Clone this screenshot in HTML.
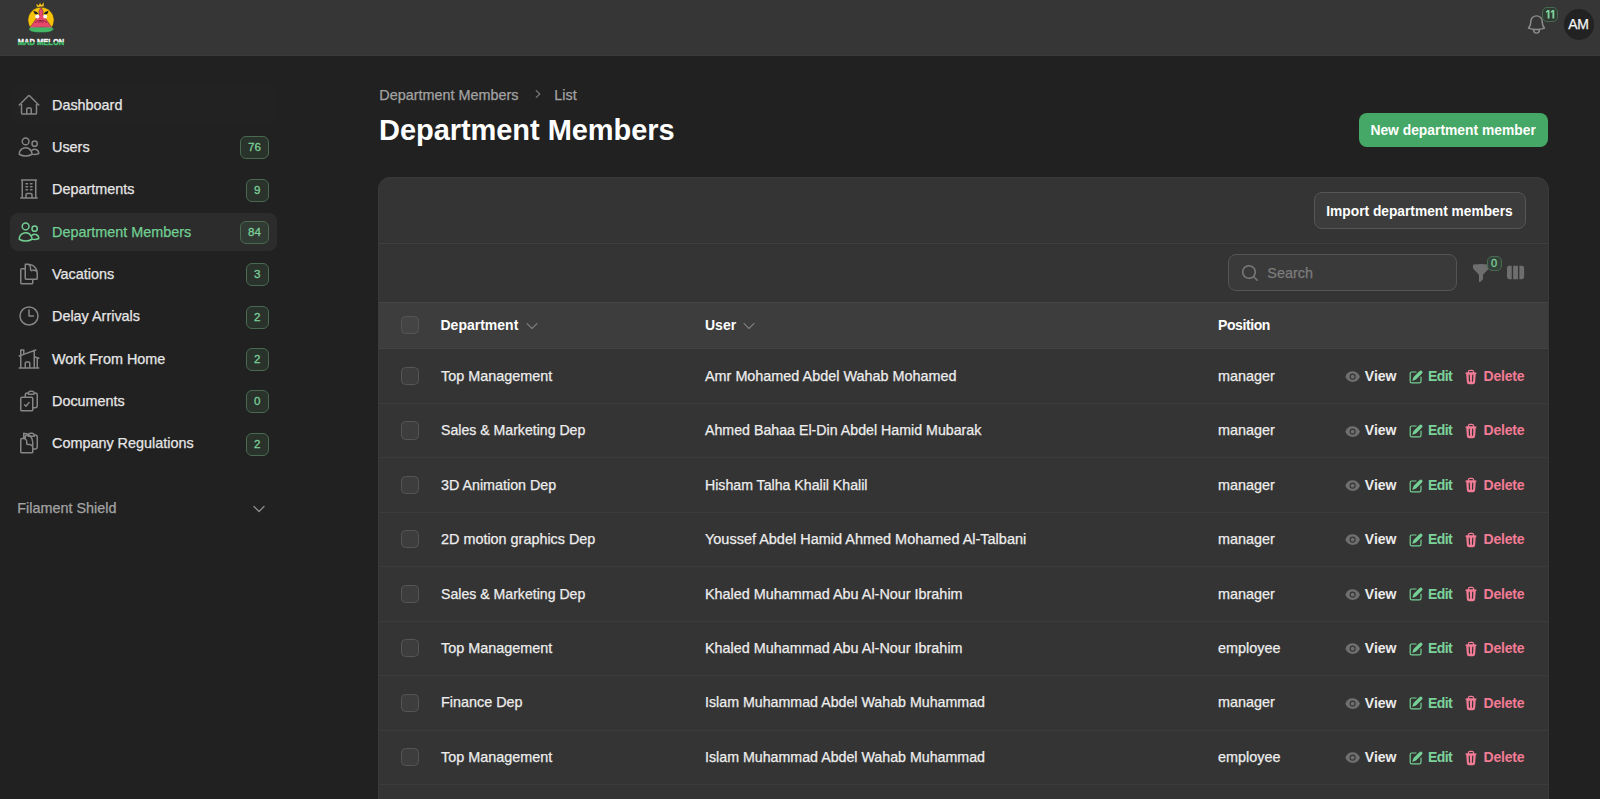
<!DOCTYPE html>
<html><head><meta charset="utf-8">
<style>
*{box-sizing:border-box;margin:0;padding:0}
html,body{width:1600px;height:799px;overflow:hidden;background:#212121;font-family:"Liberation Sans",sans-serif;color:#e8e8e8}
.abs{position:absolute}
.t{position:absolute;white-space:nowrap;line-height:20px}
.m{-webkit-text-stroke:0.25px currentColor}
.badge{position:absolute;height:23px;min-width:23px;padding:0 8.5px 0 7.1px;border-radius:6px;border:1px solid #476a51;background:#29322b;color:#7ccf98;font-size:11.6px;line-height:19.5px;text-align:center;-webkit-text-stroke:0.3px currentColor}
.box{position:absolute}
</style></head><body>
<div class="box" style="left:0;top:0;width:1600px;height:56px;background:#363636;border-bottom:1px solid #3a3a3a"></div>
<svg class="abs" style="left:0px;top:0px;width:80px;height:52px" viewBox="0 0 80 52">
<defs><linearGradient id="lg" x1="0" y1="0" x2="0" y2="1"><stop offset="0" stop-color="#ffffff"/><stop offset="0.58" stop-color="#f2f2f2"/><stop offset="0.62" stop-color="#4cc070"/><stop offset="1" stop-color="#4cc070"/></linearGradient></defs>
<clipPath id="cc"><rect x="0" y="0" width="80" height="28"/></clipPath><circle cx="41" cy="20.2" r="13.1" fill="#f7c20a" stroke="#1c1c24" stroke-width="0.5" clip-path="url(#cc)"/>
<path d="M36 3.4 L38.6 5.2 L40 2.4 L41.6 4.9 L43.8 1.8 L44 6.6 L36.8 7.2 Z" fill="#f3c21c" stroke="#1c1c24" stroke-width="0.3"/>
<path d="M41 7 L43.2 11.5 L42.9 14.6 L51.6 27.2 L30.2 27.2 L39.1 14.6 L38.8 11.5 Z" fill="#e9486c" stroke="#1c1c24" stroke-width="0.4"/>
<path d="M33.4 11.2 Q35.8 10.6 38.4 13.6 L36.8 14.6 Q34 14 33.4 11.2Z" fill="#1e1e26"/>
<path d="M48.6 11.2 Q46.2 10.6 43.6 13.6 L45.2 14.6 Q48 14 48.6 11.2Z" fill="#1e1e26"/>
<circle cx="37.3" cy="16.5" r="2" fill="#ffffff"/><circle cx="45.2" cy="16.5" r="2" fill="#ffffff"/>
<path d="M35 22.8 Q37 20.3 41 20.5 Q45 20.3 47 22.8" stroke="#5a1a2a" stroke-width="0.7" fill="none"/>
<path d="M38.5 22.3 Q41 21.2 43.5 22.3" stroke="#5a1a2a" stroke-width="0.6" fill="none"/>
<path d="M30 27.4 L52 27.4" stroke="#d8d8d8" stroke-width="0.6"/>
<path d="M28.8 28 Q41 26.8 53.6 28 Q54.4 32.6 41 32.6 Q28 32.6 28.8 28Z" fill="#45b866" stroke="#1c1c24" stroke-width="0.3"/>
<text x="18" y="45.4" font-family="Liberation Sans" font-weight="bold" font-size="9.4" fill="#1a1a20" textLength="46.4" lengthAdjust="spacingAndGlyphs" stroke="#1a1a20" stroke-width="0.8">MAD MELON</text><text x="17.7" y="44.6" font-family="Liberation Sans" font-weight="bold" font-size="9.4" fill="url(#lg)" textLength="46.6" lengthAdjust="spacingAndGlyphs" stroke="url(#lg)" stroke-width="0.55">MAD MELON</text>
</svg>
<svg class="abs" style="left:1524.5px;top:12.8px;width:23px;height:23px" viewBox="0 0 24 24" fill="none" stroke="#8e8e8e" stroke-width="1.55" stroke-linecap="round" stroke-linejoin="round"><path d="M14.857 17.082a23.848 23.848 0 005.454-1.31A8.967 8.967 0 0118 9.75v-.7V9A6 6 0 006 9v.75a8.967 8.967 0 01-2.312 6.022c1.733.64 3.56 1.085 5.455 1.31m5.714 0a24.255 24.255 0 01-5.714 0m5.714 0a3 3 0 11-5.714 0"/></svg>
<div class="badge" style="left:1542.2px;top:6.9px;height:15.6px;min-width:15.6px;width:15.6px;padding:0;border-radius:5px;background:#2f3a32"></div>
<svg class="abs" style="left:1540px;top:0px;width:20px;height:24px" viewBox="1540 0 20 24" fill="#7dd19b"><path d="M1547.6 10h1.9v8.6h-1.9v-6.6l-1.6 1v-1.7z"/><path d="M1552.4 10h1.9v8.6h-1.9v-6.6l-1.6 1v-1.7z"/></svg>
<div class="box" style="left:1563.5px;top:9px;width:30.5px;height:30.5px;border-radius:50%;background:#222222"></div>
<div class="t m" style="left:1568.3px;top:13.95px;font-size:14px;color:#f5f5f5;font-weight:normal;letter-spacing:-0.3px">AM</div>
<div class="box" style="left:10px;top:85px;width:267px;height:38px;border-radius:8px;background:#222222"></div>
<div class="box" style="left:10px;top:213px;width:266.5px;height:38px;border-radius:8px;background:#2c2c2c"></div>
<svg class="abs" style="left:17px;top:92.7px;width:24px;height:24px" viewBox="0 0 24 24" fill="none" stroke="#858585" stroke-width="1.5" stroke-linecap="round" stroke-linejoin="round"><path d="M2.25 12l8.954-8.955c.44-.439 1.152-.439 1.591 0L21.75 12M4.5 9.75v10.125c0 .621.504 1.125 1.125 1.125H9.75v-4.875c0-.621.504-1.125 1.125-1.125h2.25c.621 0 1.125.504 1.125 1.125V21h4.125c.621 0 1.125-.504 1.125-1.125V9.75M8.25 21h8.25"/></svg>
<div class="t m" style="left:52px;top:94.71px;font-size:14.4px;color:#e6e6e6;font-weight:normal;">Dashboard</div>
<svg class="abs" style="left:17px;top:135.0px;width:24px;height:24px" viewBox="0 0 24 24" fill="none" stroke="#858585" stroke-width="1.5" stroke-linecap="round" stroke-linejoin="round"><path d="M15 19.128a9.38 9.38 0 002.625.372 9.337 9.337 0 004.121-.952 4.125 4.125 0 00-7.533-2.493M15 19.128v-.003c0-1.113-.285-2.16-.786-3.07M15 19.128v.106A12.318 12.318 0 018.624 21c-2.331 0-4.512-.645-6.374-1.766l-.001-.109a6.375 6.375 0 0111.964-3.07M12 6.375a3.375 3.375 0 11-6.75 0 3.375 3.375 0 016.75 0zm8.25 2.25a2.625 2.625 0 11-5.25 0 2.625 2.625 0 015.25 0z"/></svg>
<div class="t m" style="left:52px;top:137.01px;font-size:14.4px;color:#e6e6e6;font-weight:normal;">Users</div>
<div class="badge" style="left:240px;top:136.4px;width:29px;">76</div>
<svg class="abs" style="left:17px;top:177.3px;width:24px;height:24px" viewBox="0 0 24 24" fill="none" stroke="#858585" stroke-width="1.5" stroke-linecap="round" stroke-linejoin="round"><path d="M3.75 21h16.5M4.5 3h15M5.25 3v18m13.5-18v18M9 6.75h1.5m-1.5 3h1.5m-1.5 3h1.5m3-6H15m-1.5 3H15m-1.5 3H15M9 21v-3.375c0-.621.504-1.125 1.125-1.125h3.75c.621 0 1.125.504 1.125 1.125V21"/></svg>
<div class="t m" style="left:52px;top:179.31px;font-size:14.4px;color:#e6e6e6;font-weight:normal;">Departments</div>
<div class="badge" style="left:246px;top:178.7px;width:23px;">9</div>
<svg class="abs" style="left:17px;top:219.6px;width:24px;height:24px" viewBox="0 0 24 24" fill="none" stroke="#72cf92" stroke-width="1.5" stroke-linecap="round" stroke-linejoin="round"><path d="M15 19.128a9.38 9.38 0 002.625.372 9.337 9.337 0 004.121-.952 4.125 4.125 0 00-7.533-2.493M15 19.128v-.003c0-1.113-.285-2.16-.786-3.07M15 19.128v.106A12.318 12.318 0 018.624 21c-2.331 0-4.512-.645-6.374-1.766l-.001-.109a6.375 6.375 0 0111.964-3.07M12 6.375a3.375 3.375 0 11-6.75 0 3.375 3.375 0 016.75 0zm8.25 2.25a2.625 2.625 0 11-5.25 0 2.625 2.625 0 015.25 0z"/></svg>
<div class="t m" style="left:52px;top:221.61px;font-size:14.4px;color:#72cf92;font-weight:normal;">Department Members</div>
<div class="badge" style="left:240px;top:221.0px;width:29px;background:#313a33;">84</div>
<svg class="abs" style="left:17px;top:261.9px;width:24px;height:24px" viewBox="0 0 24 24" fill="none" stroke="#858585" stroke-width="1.5" stroke-linecap="round" stroke-linejoin="round"><path d="M15.75 17.25v3.375c0 .621-.504 1.125-1.125 1.125h-9.75a1.125 1.125 0 01-1.125-1.125V7.875c0-.621.504-1.125 1.125-1.125H6.75a9.06 9.06 0 011.5.124m7.5 10.376h3.375c.621 0 1.125-.504 1.125-1.125V11.25c0-4.46-3.243-8.161-7.5-8.876a9.06 9.06 0 00-1.5-.124H9.375c-.621 0-1.125.504-1.125 1.125v3.5m7.5 10.375H9.375a1.125 1.125 0 01-1.125-1.125v-9.25m12 6.625v-1.875a3.375 3.375 0 00-3.375-3.375h-1.5A1.125 1.125 0 0113.5 7.125v-1.5a3.375 3.375 0 00-3.375-3.375H8.25"/></svg>
<div class="t m" style="left:52px;top:263.91px;font-size:14.4px;color:#e6e6e6;font-weight:normal;">Vacations</div>
<div class="badge" style="left:246px;top:263.3px;width:23px;">3</div>
<svg class="abs" style="left:17px;top:304.2px;width:24px;height:24px" viewBox="0 0 24 24" fill="none" stroke="#858585" stroke-width="1.5" stroke-linecap="round" stroke-linejoin="round"><path d="M12 6v6h4.5m4.5 0a9 9 0 11-18 0 9 9 0 0118 0z"/></svg>
<div class="t m" style="left:52px;top:306.21px;font-size:14.4px;color:#e6e6e6;font-weight:normal;">Delay Arrivals</div>
<div class="badge" style="left:246px;top:305.6px;width:23px;">2</div>
<svg class="abs" style="left:17px;top:346.5px;width:24px;height:24px" viewBox="0 0 24 24" fill="none" stroke="#858585" stroke-width="1.5" stroke-linecap="round" stroke-linejoin="round"><path d="M8.25 21v-4.875c0-.621.504-1.125 1.125-1.125h2.25c.621 0 1.125.504 1.125 1.125V21m0 0h4.5V3.545M12.75 21h7.5V10.75M2.25 21h1.5m18 0h-18M2.25 9l4.5-1.636M18.75 3l-1.5.545m0 6.205l3 1m1.5.5l-1.5-.5M6.75 7.364V3h-3v18m3-13.636l10.5-3.819"/></svg>
<div class="t m" style="left:52px;top:348.51px;font-size:14.4px;color:#e6e6e6;font-weight:normal;">Work From Home</div>
<div class="badge" style="left:246px;top:347.9px;width:23px;">2</div>
<svg class="abs" style="left:17px;top:388.79999999999995px;width:24px;height:24px" viewBox="0 0 24 24" fill="none" stroke="#858585" stroke-width="1.5" stroke-linecap="round" stroke-linejoin="round"><path d="M11.35 3.836c-.065.21-.1.433-.1.664 0 .414.336.75.75.75h4.5a.75.75 0 00.75-.75 2.25 2.25 0 00-.1-.664m-5.8 0A2.251 2.251 0 0113.5 2.25H15c1.012 0 1.867.668 2.15 1.586m-5.8 0c-.376.023-.75.05-1.124.08C9.095 4.01 8.25 4.973 8.25 6.108V8.25m8.9-4.414c.376.023.75.05 1.124.08 1.131.094 1.976 1.057 1.976 2.192V16.5A2.25 2.25 0 0118 18.75h-2.25m-7.5-10.5H4.875c-.621 0-1.125.504-1.125 1.125v11.25c0 .621.504 1.125 1.125 1.125h9.75c.621 0 1.125-.504 1.125-1.125V18.75m-7.5-10.5h6.375c.621 0 1.125.504 1.125 1.125v9.375m-8.25-3l1.5 1.5 3-3.75"/></svg>
<div class="t m" style="left:52px;top:390.81px;font-size:14.4px;color:#e6e6e6;font-weight:normal;">Documents</div>
<div class="badge" style="left:246px;top:390.2px;width:23px;">0</div>
<svg class="abs" style="left:17px;top:431.09999999999997px;width:24px;height:24px" viewBox="0 0 24 24" fill="none" stroke="#858585" stroke-width="1.5" stroke-linecap="round" stroke-linejoin="round"><path d="M8.25 7.5V6.108c0-1.135.845-2.098 1.976-2.192.373-.03.748-.057 1.123-.08M15.75 18H18a2.25 2.25 0 002.25-2.25V6.108c0-1.135-.845-2.098-1.976-2.192a48.424 48.424 0 00-1.123-.08M15.75 18.75v-1.875a3.375 3.375 0 00-3.375-3.375h-1.5a1.125 1.125 0 01-1.125-1.125v-1.5A3.375 3.375 0 006.375 7.5H5.25m11.9-3.664A2.251 2.251 0 0015 2.25h-1.5a2.251 2.251 0 00-2.15 1.586m5.8 0c.065.21.1.433.1.664v.75h-6V4.5c0-.231.035-.454.1-.664M6.75 7.5H4.875c-.621 0-1.125.504-1.125 1.125v12c0 .621.504 1.125 1.125 1.125h9.75c.621 0 1.125-.504 1.125-1.125v-9.375a9 9 0 00-9-9z"/></svg>
<div class="t m" style="left:52px;top:433.11px;font-size:14.4px;color:#e6e6e6;font-weight:normal;">Company Regulations</div>
<div class="badge" style="left:246px;top:432.5px;width:23px;">2</div>
<div class="t m" style="left:17.3px;top:498.31px;font-size:14.4px;color:#a3a3a3;font-weight:normal;">Filament Shield</div>
<svg class="abs" style="left:251px;top:501px;width:16px;height:16px" viewBox="0 0 24 24" fill="none" stroke="#8a8a8a" stroke-width="2" stroke-linecap="round" stroke-linejoin="round"><path d="M19.5 8.25l-7.5 7.5-7.5-7.5"/></svg>
<div class="t m" style="left:379.3px;top:85.01px;font-size:14.4px;color:#a3a3a3;font-weight:normal;">Department Members</div>
<svg class="abs" style="left:529.5px;top:85.5px;width:16px;height:16px" viewBox="0 0 20 20" fill="#7a7a7a"><path d="M7.21 14.77a.75.75 0 01.02-1.06L11.168 10 7.23 6.29a.75.75 0 111.04-1.08l4.5 4.25a.75.75 0 010 1.08l-4.5 4.25a.75.75 0 01-1.06-.02z"/></svg>
<div class="t m" style="left:554.3px;top:85.01px;font-size:14.4px;color:#a3a3a3;font-weight:normal;">List</div>
<div class="t" style="left:379px;top:120.45px;font-size:29px;color:#ffffff;font-weight:bold;letter-spacing:-0.05px">Department Members</div>
<div class="box" style="left:1359px;top:113px;width:189px;height:34px;border-radius:8px;background:#45a866"></div>
<div class="t" style="left:1370.4px;top:119.70px;font-size:13.85px;color:#ffffff;font-weight:bold;">New department member</div>
<div class="box" style="left:378px;top:177px;width:1171px;height:650px;border-radius:12px;background:#343434;border:1px solid #3a3a3a;overflow:hidden">
</div>
<div class="box" style="left:379px;top:243px;width:1169px;height:1px;background:#3f3f3f"></div>
<div class="box" style="left:1314px;top:192.2px;width:212px;height:36.6px;border-radius:8px;background:#3c3c3c;border:1px solid #565656"></div>
<div class="t" style="left:1326.3px;top:201.54px;font-size:13.75px;color:#ffffff;font-weight:bold;">Import department members</div>
<div class="box" style="left:1228px;top:254.3px;width:229px;height:37px;border-radius:8px;background:#3a3a3a;border:1px solid #545454"></div>
<svg class="abs" style="left:1240px;top:263px;width:20px;height:20px" viewBox="0 0 20 20" fill="#7a7a7a"><path d="M9 3.5a5.5 5.5 0 100 11 5.5 5.5 0 000-11zM2 9a7 7 0 1112.452 4.391l3.328 3.329a.75.75 0 11-1.06 1.06l-3.329-3.328A7 7 0 012 9z"/></svg>
<div class="t m" style="left:1267.3px;top:262.51px;font-size:14.4px;color:#7c7c7c;font-weight:normal;">Search</div>
<svg class="abs" style="left:1471px;top:263px;width:20px;height:20px" viewBox="0 0 20 20" fill="#6e6e6e"><path d="M2.628 1.601C5.028 1.206 7.49 1 10 1s4.973.206 7.372.601a.75.75 0 01.628.74v2.288a2.25 2.25 0 01-.659 1.59l-4.682 4.683a2.25 2.25 0 00-.659 1.59v3.037c0 .684-.31 1.33-.844 1.757l-1.937 1.55A.75.75 0 018 18.25v-5.757a2.25 2.25 0 00-.659-1.591L2.659 6.22A2.25 2.25 0 012 4.629V2.34a.75.75 0 01.628-.74z"/></svg>
<div class="badge" style="left:1486.5px;top:256px;height:14.5px;min-width:15px;padding:0 2px;border-radius:5px;font-size:11px;line-height:12.5px;background:#34413a">0</div>
<svg class="abs" style="left:1505.9px;top:263.1px;width:19.1px;height:19.1px" viewBox="0 0 20 20" fill="#6e6e6e"><path d="M14 17h2.75A2.25 2.25 0 0019 14.75v-9.5A2.25 2.25 0 0016.75 3H14v14zM12.5 3h-5v14h5V3zM3.25 3H6v14H3.25A2.25 2.25 0 011 14.75v-9.5A2.25 2.25 0 013.25 3z"/></svg>
<div class="box" style="left:379px;top:302px;width:1169px;height:1px;background:#454545"></div>
<div class="box" style="left:379px;top:303px;width:1169px;height:45px;background:#3d3d3d"></div>
<div class="box" style="left:379px;top:348px;width:1169px;height:1px;background:#444444"></div>
<div class="box" style="left:401px;top:316.0px;width:18px;height:18.2px;border-radius:4.5px;border:1.5px solid #555555;background:#444444"></div>
<div class="t" style="left:440.5px;top:314.95px;font-size:14px;color:#ffffff;font-weight:bold;">Department</div>
<svg class="abs" style="left:523.5px;top:318px;width:16px;height:16px" viewBox="0 0 24 24" fill="none" stroke="#7a7a7a" stroke-width="1.6" stroke-linecap="round" stroke-linejoin="round"><path d="M19.5 8.25l-7.5 7.5-7.5-7.5"/></svg>
<div class="t" style="left:705px;top:314.95px;font-size:14px;color:#ffffff;font-weight:bold;">User</div>
<svg class="abs" style="left:741px;top:318px;width:16px;height:16px" viewBox="0 0 24 24" fill="none" stroke="#7a7a7a" stroke-width="1.6" stroke-linecap="round" stroke-linejoin="round"><path d="M19.5 8.25l-7.5 7.5-7.5-7.5"/></svg>
<div class="t" style="left:1218px;top:314.95px;font-size:14px;color:#ffffff;font-weight:bold;letter-spacing:-0.4px">Position</div>
<div class="box" style="left:401px;top:367.0px;width:18px;height:18.2px;border-radius:4.5px;border:1.5px solid #555555;background:#3d3d3d"></div>
<div class="t m" style="left:441px;top:365.81px;font-size:14.4px;color:#ededed;font-weight:normal;">Top Management</div>
<div class="t m" style="left:705px;top:365.81px;font-size:14.4px;color:#ededed;font-weight:normal;">Amr Mohamed Abdel Wahab Mohamed</div>
<div class="t m" style="left:1218px;top:365.81px;font-size:14.4px;color:#ededed;font-weight:normal;">manager</div>
<svg class="abs" style="left:1344.8px;top:369.10px;width:15.3px;height:15.3px" viewBox="0 0 20 20" fill="#6f6f6f"><path d="M10 12.5a2.5 2.5 0 100-5 2.5 2.5 0 000 5z"/><path fill-rule="evenodd" d="M.664 10.59a1.651 1.651 0 010-1.186A10.004 10.004 0 0110 3c4.257 0 7.893 2.66 9.336 6.41.147.381.146.804 0 1.186A10.004 10.004 0 0110 17c-4.257 0-7.893-2.66-9.336-6.41zM14 10a4 4 0 11-8 0 4 4 0 018 0z"/></svg>
<div class="t" style="left:1364.8px;top:365.95px;font-size:14px;color:#ececec;font-weight:bold;">View</div>
<svg class="abs" style="left:1408px;top:368.7px;width:16px;height:16px" viewBox="0 0 20 20" fill="#74d094"><path d="M5.433 13.917l1.262-3.155A4 4 0 017.58 9.42l6.92-6.918a2.121 2.121 0 013 3l-6.92 6.918c-.383.383-.84.685-1.343.886l-3.154 1.262a.5.5 0 01-.65-.65z"/><path d="M3.5 5.75c0-.69.56-1.25 1.25-1.25H10A.75.75 0 0010 3H4.75A2.75 2.75 0 002 5.75v9.5A2.75 2.75 0 004.75 18h9.5A2.75 2.75 0 0017 15.25V10a.75.75 0 00-1.5 0v5.25c0 .69-.56 1.25-1.25 1.25h-9.5c-.69 0-1.25-.56-1.25-1.25v-9.5z"/></svg>
<div class="t" style="left:1428px;top:365.95px;font-size:14px;color:#7cd29b;font-weight:bold;letter-spacing:-0.6px">Edit</div>
<svg class="abs" style="left:1463px;top:368.5px;width:16px;height:16px" viewBox="0 0 20 20" fill="#f27b95"><path fill-rule="evenodd" d="M8.75 1A2.75 2.75 0 006 3.75v.443c-.795.077-1.584.176-2.365.298a.75.75 0 10.23 1.482l.149-.022.841 10.518A2.75 2.75 0 007.596 19h4.807a2.75 2.75 0 002.742-2.53l.841-10.52.149.023a.75.75 0 00.23-1.482A41.03 41.03 0 0014 4.193V3.75A2.75 2.75 0 0011.25 1h-2.5zM10 4c.84 0 1.673.025 2.5.075V3.75c0-.69-.56-1.25-1.25-1.25h-2.5c-.69 0-1.25.56-1.25 1.25v.325C8.327 4.025 9.16 4 10 4zM8.58 7.72a.75.75 0 00-1.5.06l.3 7.5a.75.75 0 101.5-.06l-.3-7.5zm4.34.06a.75.75 0 10-1.5-.06l-.3 7.5a.75.75 0 101.5.06l.3-7.5z"/></svg>
<div class="t" style="left:1483.5px;top:365.95px;font-size:14px;color:#f27b95;font-weight:bold;letter-spacing:-0.2px">Delete</div>
<div class="box" style="left:379px;top:403px;width:1169px;height:1px;background:#3b3b3b"></div>
<div class="box" style="left:401px;top:421.4px;width:18px;height:18.2px;border-radius:4.5px;border:1.5px solid #555555;background:#3d3d3d"></div>
<div class="t m" style="left:441px;top:420.34px;font-size:14.12px;color:#ededed;font-weight:normal;">Sales &amp; Marketing Dep</div>
<div class="t m" style="left:705px;top:420.31px;font-size:14.21px;color:#ededed;font-weight:normal;">Ahmed Bahaa El-Din Abdel Hamid Mubarak</div>
<div class="t m" style="left:1218px;top:420.24px;font-size:14.4px;color:#ededed;font-weight:normal;">manager</div>
<svg class="abs" style="left:1344.8px;top:423.53px;width:15.3px;height:15.3px" viewBox="0 0 20 20" fill="#6f6f6f"><path d="M10 12.5a2.5 2.5 0 100-5 2.5 2.5 0 000 5z"/><path fill-rule="evenodd" d="M.664 10.59a1.651 1.651 0 010-1.186A10.004 10.004 0 0110 3c4.257 0 7.893 2.66 9.336 6.41.147.381.146.804 0 1.186A10.004 10.004 0 0110 17c-4.257 0-7.893-2.66-9.336-6.41zM14 10a4 4 0 11-8 0 4 4 0 018 0z"/></svg>
<div class="t" style="left:1364.8px;top:420.38px;font-size:14px;color:#ececec;font-weight:bold;">View</div>
<svg class="abs" style="left:1408px;top:423.1px;width:16px;height:16px" viewBox="0 0 20 20" fill="#74d094"><path d="M5.433 13.917l1.262-3.155A4 4 0 017.58 9.42l6.92-6.918a2.121 2.121 0 013 3l-6.92 6.918c-.383.383-.84.685-1.343.886l-3.154 1.262a.5.5 0 01-.65-.65z"/><path d="M3.5 5.75c0-.69.56-1.25 1.25-1.25H10A.75.75 0 0010 3H4.75A2.75 2.75 0 002 5.75v9.5A2.75 2.75 0 004.75 18h9.5A2.75 2.75 0 0017 15.25V10a.75.75 0 00-1.5 0v5.25c0 .69-.56 1.25-1.25 1.25h-9.5c-.69 0-1.25-.56-1.25-1.25v-9.5z"/></svg>
<div class="t" style="left:1428px;top:420.38px;font-size:14px;color:#7cd29b;font-weight:bold;letter-spacing:-0.6px">Edit</div>
<svg class="abs" style="left:1463px;top:422.9px;width:16px;height:16px" viewBox="0 0 20 20" fill="#f27b95"><path fill-rule="evenodd" d="M8.75 1A2.75 2.75 0 006 3.75v.443c-.795.077-1.584.176-2.365.298a.75.75 0 10.23 1.482l.149-.022.841 10.518A2.75 2.75 0 007.596 19h4.807a2.75 2.75 0 002.742-2.53l.841-10.52.149.023a.75.75 0 00.23-1.482A41.03 41.03 0 0014 4.193V3.75A2.75 2.75 0 0011.25 1h-2.5zM10 4c.84 0 1.673.025 2.5.075V3.75c0-.69-.56-1.25-1.25-1.25h-2.5c-.69 0-1.25.56-1.25 1.25v.325C8.327 4.025 9.16 4 10 4zM8.58 7.72a.75.75 0 00-1.5.06l.3 7.5a.75.75 0 101.5-.06l-.3-7.5zm4.34.06a.75.75 0 10-1.5-.06l-.3 7.5a.75.75 0 101.5.06l.3-7.5z"/></svg>
<div class="t" style="left:1483.5px;top:420.38px;font-size:14px;color:#f27b95;font-weight:bold;letter-spacing:-0.2px">Delete</div>
<div class="box" style="left:379px;top:457px;width:1169px;height:1px;background:#3b3b3b"></div>
<div class="box" style="left:401px;top:475.9px;width:18px;height:18.2px;border-radius:4.5px;border:1.5px solid #555555;background:#3d3d3d"></div>
<div class="t m" style="left:441px;top:474.71px;font-size:14.3px;color:#ededed;font-weight:normal;">3D Animation Dep</div>
<div class="t m" style="left:705px;top:474.76px;font-size:14.15px;color:#ededed;font-weight:normal;">Hisham Talha Khalil Khalil</div>
<div class="t m" style="left:1218px;top:474.67px;font-size:14.4px;color:#ededed;font-weight:normal;">manager</div>
<svg class="abs" style="left:1344.8px;top:477.96px;width:15.3px;height:15.3px" viewBox="0 0 20 20" fill="#6f6f6f"><path d="M10 12.5a2.5 2.5 0 100-5 2.5 2.5 0 000 5z"/><path fill-rule="evenodd" d="M.664 10.59a1.651 1.651 0 010-1.186A10.004 10.004 0 0110 3c4.257 0 7.893 2.66 9.336 6.41.147.381.146.804 0 1.186A10.004 10.004 0 0110 17c-4.257 0-7.893-2.66-9.336-6.41zM14 10a4 4 0 11-8 0 4 4 0 018 0z"/></svg>
<div class="t" style="left:1364.8px;top:474.81px;font-size:14px;color:#ececec;font-weight:bold;">View</div>
<svg class="abs" style="left:1408px;top:477.6px;width:16px;height:16px" viewBox="0 0 20 20" fill="#74d094"><path d="M5.433 13.917l1.262-3.155A4 4 0 017.58 9.42l6.92-6.918a2.121 2.121 0 013 3l-6.92 6.918c-.383.383-.84.685-1.343.886l-3.154 1.262a.5.5 0 01-.65-.65z"/><path d="M3.5 5.75c0-.69.56-1.25 1.25-1.25H10A.75.75 0 0010 3H4.75A2.75 2.75 0 002 5.75v9.5A2.75 2.75 0 004.75 18h9.5A2.75 2.75 0 0017 15.25V10a.75.75 0 00-1.5 0v5.25c0 .69-.56 1.25-1.25 1.25h-9.5c-.69 0-1.25-.56-1.25-1.25v-9.5z"/></svg>
<div class="t" style="left:1428px;top:474.81px;font-size:14px;color:#7cd29b;font-weight:bold;letter-spacing:-0.6px">Edit</div>
<svg class="abs" style="left:1463px;top:477.4px;width:16px;height:16px" viewBox="0 0 20 20" fill="#f27b95"><path fill-rule="evenodd" d="M8.75 1A2.75 2.75 0 006 3.75v.443c-.795.077-1.584.176-2.365.298a.75.75 0 10.23 1.482l.149-.022.841 10.518A2.75 2.75 0 007.596 19h4.807a2.75 2.75 0 002.742-2.53l.841-10.52.149.023a.75.75 0 00.23-1.482A41.03 41.03 0 0014 4.193V3.75A2.75 2.75 0 0011.25 1h-2.5zM10 4c.84 0 1.673.025 2.5.075V3.75c0-.69-.56-1.25-1.25-1.25h-2.5c-.69 0-1.25.56-1.25 1.25v.325C8.327 4.025 9.16 4 10 4zM8.58 7.72a.75.75 0 00-1.5.06l.3 7.5a.75.75 0 101.5-.06l-.3-7.5zm4.34.06a.75.75 0 10-1.5-.06l-.3 7.5a.75.75 0 101.5.06l.3-7.5z"/></svg>
<div class="t" style="left:1483.5px;top:474.81px;font-size:14px;color:#f27b95;font-weight:bold;letter-spacing:-0.2px">Delete</div>
<div class="box" style="left:379px;top:512px;width:1169px;height:1px;background:#3b3b3b"></div>
<div class="box" style="left:401px;top:530.3px;width:18px;height:18.2px;border-radius:4.5px;border:1.5px solid #555555;background:#3d3d3d"></div>
<div class="t m" style="left:441px;top:529.10px;font-size:14.4px;color:#ededed;font-weight:normal;">2D motion graphics Dep</div>
<div class="t m" style="left:705px;top:529.08px;font-size:14.47px;color:#ededed;font-weight:normal;">Youssef Abdel Hamid Ahmed Mohamed Al-Talbani</div>
<div class="t m" style="left:1218px;top:529.10px;font-size:14.4px;color:#ededed;font-weight:normal;">manager</div>
<svg class="abs" style="left:1344.8px;top:532.39px;width:15.3px;height:15.3px" viewBox="0 0 20 20" fill="#6f6f6f"><path d="M10 12.5a2.5 2.5 0 100-5 2.5 2.5 0 000 5z"/><path fill-rule="evenodd" d="M.664 10.59a1.651 1.651 0 010-1.186A10.004 10.004 0 0110 3c4.257 0 7.893 2.66 9.336 6.41.147.381.146.804 0 1.186A10.004 10.004 0 0110 17c-4.257 0-7.893-2.66-9.336-6.41zM14 10a4 4 0 11-8 0 4 4 0 018 0z"/></svg>
<div class="t" style="left:1364.8px;top:529.24px;font-size:14px;color:#ececec;font-weight:bold;">View</div>
<svg class="abs" style="left:1408px;top:532.0px;width:16px;height:16px" viewBox="0 0 20 20" fill="#74d094"><path d="M5.433 13.917l1.262-3.155A4 4 0 017.58 9.42l6.92-6.918a2.121 2.121 0 013 3l-6.92 6.918c-.383.383-.84.685-1.343.886l-3.154 1.262a.5.5 0 01-.65-.65z"/><path d="M3.5 5.75c0-.69.56-1.25 1.25-1.25H10A.75.75 0 0010 3H4.75A2.75 2.75 0 002 5.75v9.5A2.75 2.75 0 004.75 18h9.5A2.75 2.75 0 0017 15.25V10a.75.75 0 00-1.5 0v5.25c0 .69-.56 1.25-1.25 1.25h-9.5c-.69 0-1.25-.56-1.25-1.25v-9.5z"/></svg>
<div class="t" style="left:1428px;top:529.24px;font-size:14px;color:#7cd29b;font-weight:bold;letter-spacing:-0.6px">Edit</div>
<svg class="abs" style="left:1463px;top:531.8px;width:16px;height:16px" viewBox="0 0 20 20" fill="#f27b95"><path fill-rule="evenodd" d="M8.75 1A2.75 2.75 0 006 3.75v.443c-.795.077-1.584.176-2.365.298a.75.75 0 10.23 1.482l.149-.022.841 10.518A2.75 2.75 0 007.596 19h4.807a2.75 2.75 0 002.742-2.53l.841-10.52.149.023a.75.75 0 00.23-1.482A41.03 41.03 0 0014 4.193V3.75A2.75 2.75 0 0011.25 1h-2.5zM10 4c.84 0 1.673.025 2.5.075V3.75c0-.69-.56-1.25-1.25-1.25h-2.5c-.69 0-1.25.56-1.25 1.25v.325C8.327 4.025 9.16 4 10 4zM8.58 7.72a.75.75 0 00-1.5.06l.3 7.5a.75.75 0 101.5-.06l-.3-7.5zm4.34.06a.75.75 0 10-1.5-.06l-.3 7.5a.75.75 0 101.5.06l.3-7.5z"/></svg>
<div class="t" style="left:1483.5px;top:529.24px;font-size:14px;color:#f27b95;font-weight:bold;letter-spacing:-0.2px">Delete</div>
<div class="box" style="left:379px;top:566px;width:1169px;height:1px;background:#3b3b3b"></div>
<div class="box" style="left:401px;top:584.7px;width:18px;height:18.2px;border-radius:4.5px;border:1.5px solid #555555;background:#3d3d3d"></div>
<div class="t m" style="left:441px;top:583.63px;font-size:14.12px;color:#ededed;font-weight:normal;">Sales &amp; Marketing Dep</div>
<div class="t m" style="left:705px;top:583.53px;font-size:14.4px;color:#ededed;font-weight:normal;">Khaled Muhammad Abu Al-Nour Ibrahim</div>
<div class="t m" style="left:1218px;top:583.53px;font-size:14.4px;color:#ededed;font-weight:normal;">manager</div>
<svg class="abs" style="left:1344.8px;top:586.82px;width:15.3px;height:15.3px" viewBox="0 0 20 20" fill="#6f6f6f"><path d="M10 12.5a2.5 2.5 0 100-5 2.5 2.5 0 000 5z"/><path fill-rule="evenodd" d="M.664 10.59a1.651 1.651 0 010-1.186A10.004 10.004 0 0110 3c4.257 0 7.893 2.66 9.336 6.41.147.381.146.804 0 1.186A10.004 10.004 0 0110 17c-4.257 0-7.893-2.66-9.336-6.41zM14 10a4 4 0 11-8 0 4 4 0 018 0z"/></svg>
<div class="t" style="left:1364.8px;top:583.67px;font-size:14px;color:#ececec;font-weight:bold;">View</div>
<svg class="abs" style="left:1408px;top:586.4px;width:16px;height:16px" viewBox="0 0 20 20" fill="#74d094"><path d="M5.433 13.917l1.262-3.155A4 4 0 017.58 9.42l6.92-6.918a2.121 2.121 0 013 3l-6.92 6.918c-.383.383-.84.685-1.343.886l-3.154 1.262a.5.5 0 01-.65-.65z"/><path d="M3.5 5.75c0-.69.56-1.25 1.25-1.25H10A.75.75 0 0010 3H4.75A2.75 2.75 0 002 5.75v9.5A2.75 2.75 0 004.75 18h9.5A2.75 2.75 0 0017 15.25V10a.75.75 0 00-1.5 0v5.25c0 .69-.56 1.25-1.25 1.25h-9.5c-.69 0-1.25-.56-1.25-1.25v-9.5z"/></svg>
<div class="t" style="left:1428px;top:583.67px;font-size:14px;color:#7cd29b;font-weight:bold;letter-spacing:-0.6px">Edit</div>
<svg class="abs" style="left:1463px;top:586.2px;width:16px;height:16px" viewBox="0 0 20 20" fill="#f27b95"><path fill-rule="evenodd" d="M8.75 1A2.75 2.75 0 006 3.75v.443c-.795.077-1.584.176-2.365.298a.75.75 0 10.23 1.482l.149-.022.841 10.518A2.75 2.75 0 007.596 19h4.807a2.75 2.75 0 002.742-2.53l.841-10.52.149.023a.75.75 0 00.23-1.482A41.03 41.03 0 0014 4.193V3.75A2.75 2.75 0 0011.25 1h-2.5zM10 4c.84 0 1.673.025 2.5.075V3.75c0-.69-.56-1.25-1.25-1.25h-2.5c-.69 0-1.25.56-1.25 1.25v.325C8.327 4.025 9.16 4 10 4zM8.58 7.72a.75.75 0 00-1.5.06l.3 7.5a.75.75 0 101.5-.06l-.3-7.5zm4.34.06a.75.75 0 10-1.5-.06l-.3 7.5a.75.75 0 101.5.06l.3-7.5z"/></svg>
<div class="t" style="left:1483.5px;top:583.67px;font-size:14px;color:#f27b95;font-weight:bold;letter-spacing:-0.2px">Delete</div>
<div class="box" style="left:379px;top:621px;width:1169px;height:1px;background:#3b3b3b"></div>
<div class="box" style="left:401px;top:639.2px;width:18px;height:18.2px;border-radius:4.5px;border:1.5px solid #555555;background:#3d3d3d"></div>
<div class="t m" style="left:441px;top:637.96px;font-size:14.4px;color:#ededed;font-weight:normal;">Top Management</div>
<div class="t m" style="left:705px;top:637.96px;font-size:14.4px;color:#ededed;font-weight:normal;">Khaled Muhammad Abu Al-Nour Ibrahim</div>
<div class="t m" style="left:1218px;top:637.96px;font-size:14.4px;color:#ededed;font-weight:normal;">employee</div>
<svg class="abs" style="left:1344.8px;top:641.25px;width:15.3px;height:15.3px" viewBox="0 0 20 20" fill="#6f6f6f"><path d="M10 12.5a2.5 2.5 0 100-5 2.5 2.5 0 000 5z"/><path fill-rule="evenodd" d="M.664 10.59a1.651 1.651 0 010-1.186A10.004 10.004 0 0110 3c4.257 0 7.893 2.66 9.336 6.41.147.381.146.804 0 1.186A10.004 10.004 0 0110 17c-4.257 0-7.893-2.66-9.336-6.41zM14 10a4 4 0 11-8 0 4 4 0 018 0z"/></svg>
<div class="t" style="left:1364.8px;top:638.10px;font-size:14px;color:#ececec;font-weight:bold;">View</div>
<svg class="abs" style="left:1408px;top:640.9px;width:16px;height:16px" viewBox="0 0 20 20" fill="#74d094"><path d="M5.433 13.917l1.262-3.155A4 4 0 017.58 9.42l6.92-6.918a2.121 2.121 0 013 3l-6.92 6.918c-.383.383-.84.685-1.343.886l-3.154 1.262a.5.5 0 01-.65-.65z"/><path d="M3.5 5.75c0-.69.56-1.25 1.25-1.25H10A.75.75 0 0010 3H4.75A2.75 2.75 0 002 5.75v9.5A2.75 2.75 0 004.75 18h9.5A2.75 2.75 0 0017 15.25V10a.75.75 0 00-1.5 0v5.25c0 .69-.56 1.25-1.25 1.25h-9.5c-.69 0-1.25-.56-1.25-1.25v-9.5z"/></svg>
<div class="t" style="left:1428px;top:638.10px;font-size:14px;color:#7cd29b;font-weight:bold;letter-spacing:-0.6px">Edit</div>
<svg class="abs" style="left:1463px;top:640.7px;width:16px;height:16px" viewBox="0 0 20 20" fill="#f27b95"><path fill-rule="evenodd" d="M8.75 1A2.75 2.75 0 006 3.75v.443c-.795.077-1.584.176-2.365.298a.75.75 0 10.23 1.482l.149-.022.841 10.518A2.75 2.75 0 007.596 19h4.807a2.75 2.75 0 002.742-2.53l.841-10.52.149.023a.75.75 0 00.23-1.482A41.03 41.03 0 0014 4.193V3.75A2.75 2.75 0 0011.25 1h-2.5zM10 4c.84 0 1.673.025 2.5.075V3.75c0-.69-.56-1.25-1.25-1.25h-2.5c-.69 0-1.25.56-1.25 1.25v.325C8.327 4.025 9.16 4 10 4zM8.58 7.72a.75.75 0 00-1.5.06l.3 7.5a.75.75 0 101.5-.06l-.3-7.5zm4.34.06a.75.75 0 10-1.5-.06l-.3 7.5a.75.75 0 101.5.06l.3-7.5z"/></svg>
<div class="t" style="left:1483.5px;top:638.10px;font-size:14px;color:#f27b95;font-weight:bold;letter-spacing:-0.2px">Delete</div>
<div class="box" style="left:379px;top:675px;width:1169px;height:1px;background:#3b3b3b"></div>
<div class="box" style="left:401px;top:693.6px;width:18px;height:18.2px;border-radius:4.5px;border:1.5px solid #555555;background:#3d3d3d"></div>
<div class="t m" style="left:441px;top:692.39px;font-size:14.4px;color:#ededed;font-weight:normal;">Finance Dep</div>
<div class="t m" style="left:705px;top:692.45px;font-size:14.23px;color:#ededed;font-weight:normal;">Islam Muhammad Abdel Wahab Muhammad</div>
<div class="t m" style="left:1218px;top:692.39px;font-size:14.4px;color:#ededed;font-weight:normal;">manager</div>
<svg class="abs" style="left:1344.8px;top:695.68px;width:15.3px;height:15.3px" viewBox="0 0 20 20" fill="#6f6f6f"><path d="M10 12.5a2.5 2.5 0 100-5 2.5 2.5 0 000 5z"/><path fill-rule="evenodd" d="M.664 10.59a1.651 1.651 0 010-1.186A10.004 10.004 0 0110 3c4.257 0 7.893 2.66 9.336 6.41.147.381.146.804 0 1.186A10.004 10.004 0 0110 17c-4.257 0-7.893-2.66-9.336-6.41zM14 10a4 4 0 11-8 0 4 4 0 018 0z"/></svg>
<div class="t" style="left:1364.8px;top:692.53px;font-size:14px;color:#ececec;font-weight:bold;">View</div>
<svg class="abs" style="left:1408px;top:695.3px;width:16px;height:16px" viewBox="0 0 20 20" fill="#74d094"><path d="M5.433 13.917l1.262-3.155A4 4 0 017.58 9.42l6.92-6.918a2.121 2.121 0 013 3l-6.92 6.918c-.383.383-.84.685-1.343.886l-3.154 1.262a.5.5 0 01-.65-.65z"/><path d="M3.5 5.75c0-.69.56-1.25 1.25-1.25H10A.75.75 0 0010 3H4.75A2.75 2.75 0 002 5.75v9.5A2.75 2.75 0 004.75 18h9.5A2.75 2.75 0 0017 15.25V10a.75.75 0 00-1.5 0v5.25c0 .69-.56 1.25-1.25 1.25h-9.5c-.69 0-1.25-.56-1.25-1.25v-9.5z"/></svg>
<div class="t" style="left:1428px;top:692.53px;font-size:14px;color:#7cd29b;font-weight:bold;letter-spacing:-0.6px">Edit</div>
<svg class="abs" style="left:1463px;top:695.1px;width:16px;height:16px" viewBox="0 0 20 20" fill="#f27b95"><path fill-rule="evenodd" d="M8.75 1A2.75 2.75 0 006 3.75v.443c-.795.077-1.584.176-2.365.298a.75.75 0 10.23 1.482l.149-.022.841 10.518A2.75 2.75 0 007.596 19h4.807a2.75 2.75 0 002.742-2.53l.841-10.52.149.023a.75.75 0 00.23-1.482A41.03 41.03 0 0014 4.193V3.75A2.75 2.75 0 0011.25 1h-2.5zM10 4c.84 0 1.673.025 2.5.075V3.75c0-.69-.56-1.25-1.25-1.25h-2.5c-.69 0-1.25.56-1.25 1.25v.325C8.327 4.025 9.16 4 10 4zM8.58 7.72a.75.75 0 00-1.5.06l.3 7.5a.75.75 0 101.5-.06l-.3-7.5zm4.34.06a.75.75 0 10-1.5-.06l-.3 7.5a.75.75 0 101.5.06l.3-7.5z"/></svg>
<div class="t" style="left:1483.5px;top:692.53px;font-size:14px;color:#f27b95;font-weight:bold;letter-spacing:-0.2px">Delete</div>
<div class="box" style="left:379px;top:730px;width:1169px;height:1px;background:#3b3b3b"></div>
<div class="box" style="left:401px;top:748.0px;width:18px;height:18.2px;border-radius:4.5px;border:1.5px solid #555555;background:#3d3d3d"></div>
<div class="t m" style="left:441px;top:746.82px;font-size:14.4px;color:#ededed;font-weight:normal;">Top Management</div>
<div class="t m" style="left:705px;top:746.88px;font-size:14.23px;color:#ededed;font-weight:normal;">Islam Muhammad Abdel Wahab Muhammad</div>
<div class="t m" style="left:1218px;top:746.82px;font-size:14.4px;color:#ededed;font-weight:normal;">employee</div>
<svg class="abs" style="left:1344.8px;top:750.11px;width:15.3px;height:15.3px" viewBox="0 0 20 20" fill="#6f6f6f"><path d="M10 12.5a2.5 2.5 0 100-5 2.5 2.5 0 000 5z"/><path fill-rule="evenodd" d="M.664 10.59a1.651 1.651 0 010-1.186A10.004 10.004 0 0110 3c4.257 0 7.893 2.66 9.336 6.41.147.381.146.804 0 1.186A10.004 10.004 0 0110 17c-4.257 0-7.893-2.66-9.336-6.41zM14 10a4 4 0 11-8 0 4 4 0 018 0z"/></svg>
<div class="t" style="left:1364.8px;top:746.96px;font-size:14px;color:#ececec;font-weight:bold;">View</div>
<svg class="abs" style="left:1408px;top:749.7px;width:16px;height:16px" viewBox="0 0 20 20" fill="#74d094"><path d="M5.433 13.917l1.262-3.155A4 4 0 017.58 9.42l6.92-6.918a2.121 2.121 0 013 3l-6.92 6.918c-.383.383-.84.685-1.343.886l-3.154 1.262a.5.5 0 01-.65-.65z"/><path d="M3.5 5.75c0-.69.56-1.25 1.25-1.25H10A.75.75 0 0010 3H4.75A2.75 2.75 0 002 5.75v9.5A2.75 2.75 0 004.75 18h9.5A2.75 2.75 0 0017 15.25V10a.75.75 0 00-1.5 0v5.25c0 .69-.56 1.25-1.25 1.25h-9.5c-.69 0-1.25-.56-1.25-1.25v-9.5z"/></svg>
<div class="t" style="left:1428px;top:746.96px;font-size:14px;color:#7cd29b;font-weight:bold;letter-spacing:-0.6px">Edit</div>
<svg class="abs" style="left:1463px;top:749.5px;width:16px;height:16px" viewBox="0 0 20 20" fill="#f27b95"><path fill-rule="evenodd" d="M8.75 1A2.75 2.75 0 006 3.75v.443c-.795.077-1.584.176-2.365.298a.75.75 0 10.23 1.482l.149-.022.841 10.518A2.75 2.75 0 007.596 19h4.807a2.75 2.75 0 002.742-2.53l.841-10.52.149.023a.75.75 0 00.23-1.482A41.03 41.03 0 0014 4.193V3.75A2.75 2.75 0 0011.25 1h-2.5zM10 4c.84 0 1.673.025 2.5.075V3.75c0-.69-.56-1.25-1.25-1.25h-2.5c-.69 0-1.25.56-1.25 1.25v.325C8.327 4.025 9.16 4 10 4zM8.58 7.72a.75.75 0 00-1.5.06l.3 7.5a.75.75 0 101.5-.06l-.3-7.5zm4.34.06a.75.75 0 10-1.5-.06l-.3 7.5a.75.75 0 101.5.06l.3-7.5z"/></svg>
<div class="t" style="left:1483.5px;top:746.96px;font-size:14px;color:#f27b95;font-weight:bold;letter-spacing:-0.2px">Delete</div>
<div class="box" style="left:379px;top:784px;width:1169px;height:1px;background:#3b3b3b"></div>
</body></html>
